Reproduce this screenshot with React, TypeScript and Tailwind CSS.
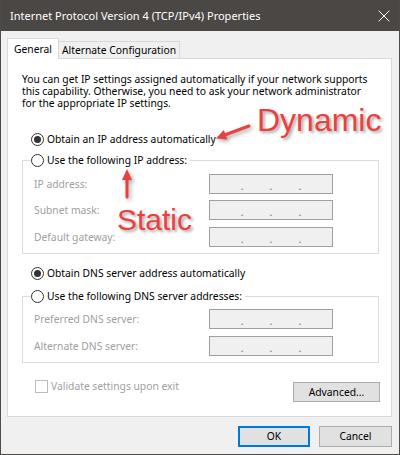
import { X } from "lucide-react";

const Radio = ({ checked, label }: { checked?: boolean; label: string }) => {
  return (
    <div className="flex items-center h-[13px]">
      <span className="w-[13px] h-[13px] rounded-full border border-[#333333] bg-white flex items-center justify-center shrink-0">
        {checked && <span className="w-[7px] h-[7px] rounded-full bg-[#333333]" />}
      </span>
      <span className="ml-[3px] text-black whitespace-nowrap">{label}</span>
    </div>
  );
};

const IpField = ({ label, className }: { label: string; className?: string }) => {
  return (
    <div className={`flex items-center h-[20px] ${className ?? ""}`}>
      <span className="w-[178px] pl-[3px] text-[#a0a0a0] whitespace-nowrap">{label}</span>
      <div className="w-[124px] h-[20px] border border-[#a0a0a0] bg-[#f0f0f0] flex items-center justify-center gap-[26px] text-[#6d6d6d] leading-none pt-[4px]">
        <span>.</span>
        <span>.</span>
        <span>.</span>
      </div>
    </div>
  );
};

const App = () => {
  return (
    <div className="relative w-[400px] h-[455px] bg-[#f0f0f0] border-x border-b border-[#4d4a48] font-['Noto_Sans',sans-serif] text-[10.3px] leading-none overflow-hidden">
      {/* title bar */}
      <div className="h-[31px] bg-[#4b4745] flex items-center justify-between pl-[9px] pr-[5px] text-white text-[11px]">
        <span className="whitespace-nowrap">Internet Protocol Version 4 (TCP/IPv4) Properties</span>
        <X size={20} strokeWidth={1.2} />
      </div>

      <div className="px-[6px]">
        {/* tabs */}
        <div className="mt-[7px] h-[20px] flex items-start">
          <div className="relative z-10 h-[21px] w-[52px] bg-white border border-b-0 border-[#d9d9d9] flex items-center justify-center whitespace-nowrap">
            General
          </div>
          <div className="mt-[3px] h-[17px] w-[121px] bg-[#f0f0f0] border-t border-r border-[#d9d9d9] flex items-center justify-center whitespace-nowrap">
            Alternate Configuration
          </div>
        </div>

        {/* panel */}
        <div className="w-[385px] bg-white border border-[#d9d9d9] pl-[14px] pr-[11px]">
          <p className="mt-[14px] leading-[12px] whitespace-nowrap">
            You can get IP settings assigned automatically if your network supports
            <br />
            this capability. Otherwise, you need to ask your network administrator
            <br />
            for the appropriate IP settings.
          </p>

          <div className="mt-[24px] ml-[9px]">
            <Radio checked label="Obtain an IP address automatically" />
          </div>

          <fieldset className="mt-[8px] w-[357px] border border-[#dcdcdc] px-[8px] pb-[6px]">
            <legend className="pr-[3px]">
              <Radio label="Use the following IP address:" />
            </legend>
            <IpField label="IP address:" className="mt-[7px]" />
            <IpField label="Subnet mask:" className="mt-[6px]" />
            <IpField label="Default gateway:" className="mt-[7px]" />
          </fieldset>

          <div className="mt-[13px] ml-[9px]">
            <Radio checked label="Obtain DNS server address automatically" />
          </div>

          <fieldset className="mt-[10px] w-[357px] border border-[#dcdcdc] px-[8px] pb-[6px]">
            <legend className="pr-[3px]">
              <Radio label="Use the following DNS server addresses:" />
            </legend>
            <IpField label="Preferred DNS server:" className="mt-[6px]" />
            <IpField label="Alternate DNS server:" className="mt-[7px]" />
          </fieldset>

          <div className="flex items-start justify-between pb-[14px]">
            <div className="mt-[17px] ml-[13px] flex items-center">
              <span className="w-[13px] h-[13px] border border-[#bcbcbc] bg-white" />
              <span className="ml-[3px] text-[#a0a0a0] whitespace-nowrap">Validate settings upon exit</span>
            </div>
            <button className="mt-[19px] w-[87px] h-[20px] bg-[#e1e1e1] border border-[#adadad] text-black">
              Advanced...
            </button>
          </div>
        </div>

        {/* dialog buttons */}
        <div className="mt-[9px] flex justify-end gap-[9px] pr-[1px]">
          <button className="w-[72px] h-[21px] bg-[#e1e1e1] border-2 border-[#0078d7] text-black">OK</button>
          <button className="w-[73px] h-[21px] bg-[#e1e1e1] border border-[#adadad] text-black">Cancel</button>
        </div>
      </div>

      {/* annotations */}
      <span className="absolute left-[256px] top-[104px] font-['Liberation_Sans',Arial,sans-serif] text-[32px] leading-none text-[#e8413f] [text-shadow:2px_2px_3px_rgba(0,0,0,0.35)]">
        Dynamic
      </span>
      <span className="absolute left-[116px] top-[205px] font-['Liberation_Sans',Arial,sans-serif] text-[30px] leading-none text-[#e8413f] [text-shadow:2px_2px_3px_rgba(0,0,0,0.35)]">
        Static
      </span>
      <svg
        className="absolute left-0 top-0 pointer-events-none drop-shadow-[2px_2px_2px_rgba(0,0,0,0.35)]"
        width="400"
        height="455"
        viewBox="0 0 400 455"
      >
        <line x1="248" y1="126" x2="225" y2="134.5" stroke="#e8413f" strokeWidth="3" strokeLinecap="round" />
        <polygon points="215,138.5 222.8,130 226.4,139.6" fill="#e8413f" />
        <line x1="126" y1="197" x2="126" y2="178" stroke="#e8413f" strokeWidth="3" strokeLinecap="round" />
        <polygon points="126,169 121,180 131,180" fill="#e8413f" />
      </svg>
    </div>
  );
};

export default App;
